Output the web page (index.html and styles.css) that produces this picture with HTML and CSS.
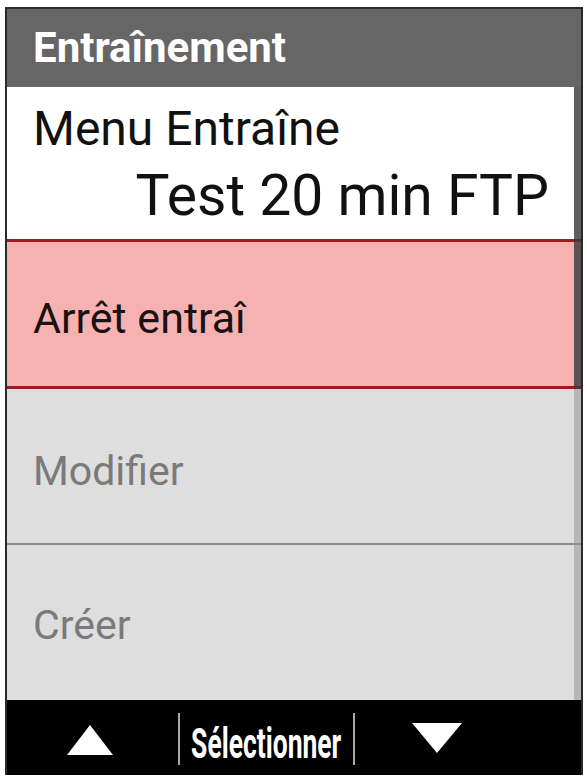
FILE: index.html
```html
<!DOCTYPE html>
<html lang="fr">
<head>
<meta charset="utf-8">
<title>Entraînement</title>
<link rel="stylesheet" href="styles.css">
</head>
<body>
<div class="device">
  <div class="header"><span class="title">Entraînement</span></div>
  <div class="list">
    <div class="info">
      <div class="label">Menu Entraîne</div>
      <div class="value">Test 20 min FTP</div>
    </div>
    <div class="row selected"><span class="row-text">Arrêt entraî</span></div>
    <div class="row disabled"><span class="row-text">Modifier</span></div>
    <div class="sep"></div>
    <div class="row disabled last"><span class="row-text">Créer</span></div>
    <div class="scrollbar"><div class="thumb"></div><div class="track"></div></div>
  </div>
  <div class="footer">
    <div class="cell first"><span class="tri-up"></span></div>
    <div class="vline"></div>
    <div class="cell mid"><span class="select">Sélectionner</span></div>
    <div class="vline"></div>
    <div class="cell third"><span class="tri-down"></span></div>
  </div>
</div>
</body>
</html>
```
FILE: styles.css
```css
html, body {
  margin: 0;
  padding: 0;
  background: #ffffff;
}
body {
  font-family: Roboto, "Liberation Sans", sans-serif;
}
.device {
  margin: 7px 0 0 5px;
  width: 574px;
  border: 2px solid #2a2a2a;
  border-bottom: 0;
  background: #ffffff;
}
.header {
  height: 78px;
  background: #666666;
  display: flex;
  align-items: center;
  padding-left: 26px;
}
.title {
  color: #ffffff;
  font-weight: 700;
  font-size: 42px;
  line-height: 1;
}
.list {
  position: relative;
}
.info {
  height: 152px;
  box-sizing: border-box;
  padding: 18px 32px 0 26px;
  background: #ffffff;
  color: #111111;
}
.label {
  font-size: 48px;
  line-height: 48px;
}
.value {
  margin-top: 14px;
  font-size: 57px;
  line-height: 57px;
  text-align: right;
}
.row {
  display: flex;
  align-items: center;
  padding-left: 26px;
  font-size: 41px;
  line-height: 1;
  box-sizing: border-box;
}
.selected {
  height: 150px;
  background: #f6b1b1;
  border-top: 3px solid #a01c1c;
  border-bottom: 3px solid #a01c1c;
  color: #1a1212;
  padding-top: 8px;
  font-size: 43px;
}
.disabled {
  background: #dedede;
  color: #7a7a7a;
  height: 154px;
  padding-top: 10px;
}
.last {
  height: 155px;
  padding-top: 6px;
}
.sep {
  height: 2px;
  background: #8a8a8a;
}
.scrollbar {
  position: absolute;
  top: 0;
  right: 0;
  bottom: 0;
  width: 7px;
  display: flex;
  flex-direction: column;
}
.thumb {
  height: 302px;
  background: rgba(60, 60, 60, 0.82);
}
.track {
  flex: 1;
  background: rgba(150, 150, 150, 0.55);
}
.footer {
  height: 75px;
  background: #000000;
  display: flex;
  align-items: flex-start;
}
.cell {
  height: 75px;
  display: flex;
  align-items: center;
  justify-content: center;
  box-sizing: border-box;
}
.first {
  width: 171px;
  padding-right: 5px;
}
.mid {
  width: 173px;
}
.third {
  width: 164px;
}
.vline {
  width: 2px;
  height: 52px;
  margin-top: 13px;
  background: #a8a8a8;
}
.tri-up {
  width: 0;
  height: 0;
  border-left: 23px solid transparent;
  border-right: 23px solid transparent;
  border-bottom: 30px solid #ffffff;
  margin-top: 5px;
}
.tri-down {
  width: 0;
  height: 0;
  border-left: 25px solid transparent;
  border-right: 25px solid transparent;
  border-top: 30px solid #ffffff;
  margin-top: 1px;
}
.select {
  color: #ffffff;
  font-weight: 700;
  font-size: 42px;
  line-height: 1;
  display: inline-block;
  transform: scaleX(0.63);
  margin-top: 12px;
  white-space: nowrap;
}
```
